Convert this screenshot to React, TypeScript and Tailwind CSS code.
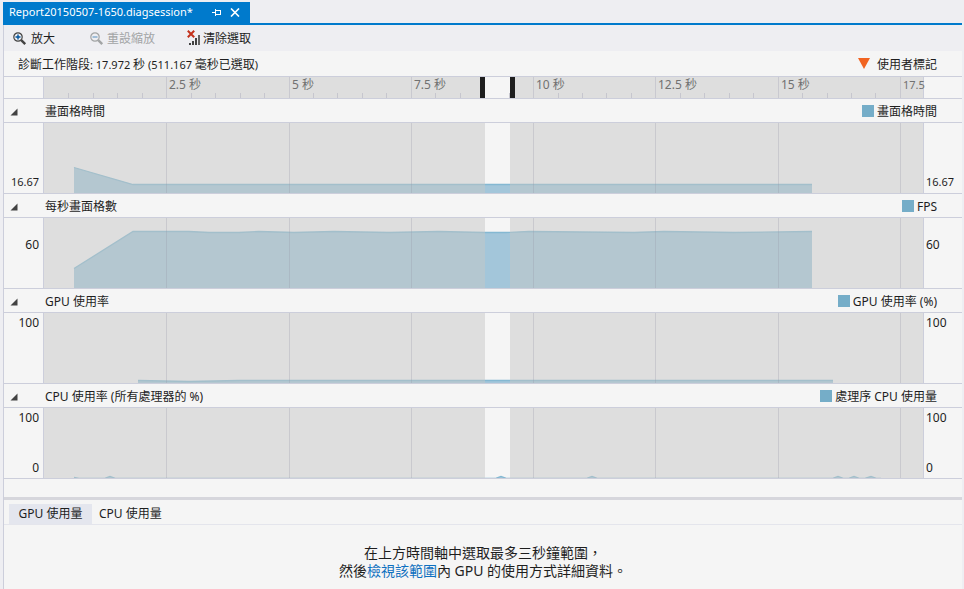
import React from "react";

const PX_PER_SECOND = 48.91;
const PLOT_W = 879;
const PLOT_H = 70;
const SELECTION = { start: 441, end: 466 };

const toX = (seconds: number) => Math.round(seconds * PX_PER_SECOND);
const percent = (x: number) => `${(x / PLOT_W) * 100}%`;

const MAJORS = [2.5, 5, 7.5, 10, 12.5, 15, 17.5];
const MINORS = Array.from({ length: 34 }, (_, i) => (i + 1) * 0.5).filter((s) => s % 2.5 !== 0);

type Point = [number, number];

type Lane = {
  id: string;
  title: string;
  legend: string;
  labels: { text: string; place: string }[];
  points: Point[];
};

const LANES: Lane[] = [
  {
    id: "frame-time",
    title: "畫面格時間",
    legend: "畫面格時間",
    labels: [{ text: "16.67", place: "mt-auto mb-[3px] text-[11px]" }],
    points: [[30, 44], [89, 61], [768, 61]],
  },
  {
    id: "fps",
    title: "每秒畫面格數",
    legend: "FPS",
    labels: [{ text: "60", place: "mt-[19px]" }],
    points: [
      [30, 50], [89, 13], [145, 13], [165, 14], [195, 14], [215, 13], [250, 14], [290, 13],
      [345, 14], [395, 13], [440, 14], [462, 14], [485, 13], [590, 14], [620, 13], [690, 14], [768, 13],
    ],
  },
  {
    id: "gpu",
    title: "GPU 使用率",
    legend: "GPU 使用率 (%)",
    labels: [{ text: "100", place: "mt-[2px]" }],
    points: [[94, 67], [145, 68], [195, 67], [789, 67]],
  },
  {
    id: "cpu",
    title: "CPU 使用率 (所有處理器的 %)",
    legend: "處理序 CPU 使用量",
    labels: [
      { text: "100", place: "mt-[2px]" },
      { text: "0", place: "mt-auto mb-[2px]" },
    ],
    points: [
      [30, 69], [35, 70], [60, 70], [66, 68], [72, 70], [451, 70], [457, 68], [463, 70], [542, 70], [548, 68], [554, 70],
      [788, 70], [794, 68], [800, 70], [804, 70], [810, 68], [816, 70], [820, 70], [827, 68], [833, 70], [837, 70],
    ],
  },
];

function Series({ points, fill, stroke, clip }: { points: Point[]; fill: string; stroke: string; clip: string }) {
  const line = points.map(([x, y]) => `${x},${y + 0.5}`).join(" ");
  const first = points[0][0];
  const last = points[points.length - 1][0];
  return (
    <g clipPath={`url(#${clip})`}>
      <polygon points={`${first},${PLOT_H} ${line} ${last},${PLOT_H}`} fill={fill} />
      <polyline points={line} fill="none" stroke={stroke} strokeWidth="1.3" vectorEffect="non-scaling-stroke" />
    </g>
  );
}

function Plot({ lane }: { lane: Lane }) {
  const { start, end } = SELECTION;
  return (
    <svg
      className="block h-[70px] min-w-0 flex-1 bg-[#dedede]"
      viewBox={`0 0 ${PLOT_W} ${PLOT_H}`}
      preserveAspectRatio="none"
      role="img"
      aria-label={lane.title}
    >
      <defs>
        <clipPath id={`${lane.id}-in`}>
          <rect x={start} width={end - start} height={PLOT_H} />
        </clipPath>
        <clipPath id={`${lane.id}-out`}>
          <rect width={start} height={PLOT_H} />
          <rect x={end} width={PLOT_W - end} height={PLOT_H} />
        </clipPath>
      </defs>
      <rect x={start} width={end - start} height={PLOT_H} fill="#f5f5f5" />
      <Series points={lane.points} fill="#b4c7d0" stroke="#a3bfcb" clip={`${lane.id}-out`} />
      <Series points={lane.points} fill="#a3c6da" stroke="#84b8d2" clip={`${lane.id}-in`} />
      {MAJORS.map((s) => (
        <rect key={s} x={toX(s)} width="1" height={PLOT_H} fill="#9898a8" fillOpacity="0.3" shapeRendering="crispEdges" />
      ))}
    </svg>
  );
}

function AxisLabels({ lane, side }: { lane: Lane; side: string }) {
  return (
    <div className={`flex h-[70px] shrink-0 flex-col leading-4 ${side}`}>
      {lane.labels.map((l) => (
        <span key={l.text} className={l.place}>
          {l.text}
        </span>
      ))}
    </div>
  );
}

function LaneView({ lane }: { lane: Lane }) {
  return (
    <section>
      <header className="flex h-6 items-center border-b border-[#cccedb] pt-[3px] pr-[25px]">
        <button type="button" aria-label={`摺疊 ${lane.title}`} className="flex w-[41px] shrink-0 pl-[6px]">
          <svg width="8" height="8" viewBox="0 0 8 8">
            <path d="M7.5 0.5V7.5H0.5Z" fill="#424242" />
          </svg>
        </button>
        <h2 className="flex-1">{lane.title}</h2>
        <span className="mr-[3px] mb-[2px] size-3 bg-[#75adc8]" />
        <span>{lane.legend}</span>
      </header>
      <div className="flex border-b border-[#cccedb]">
        <AxisLabels lane={lane} side="w-10 border-r border-[#cccedb] pr-1 text-right" />
        <Plot lane={lane} />
        <AxisLabels lane={lane} side="w-[39px] border-l border-[#cccedb] pl-[2px]" />
      </div>
    </section>
  );
}

function Ruler() {
  return (
    <div className="flex h-[23px] border-y border-[#cccedb] text-[#717171]">
      <div className="w-10 shrink-0 border-r border-[#cccedb]" />
      <div className="relative min-w-0 flex-1 bg-[#dedede]">
        <svg className="block h-full w-full" viewBox={`0 0 ${PLOT_W} 21`} preserveAspectRatio="none" shapeRendering="crispEdges">
          <rect x={SELECTION.start} width={SELECTION.end - SELECTION.start} height="21" fill="#f5f5f5" />
          {MINORS.map((s) => (
            <rect key={s} x={toX(s)} y="16" width="1" height="5" fill="#c6c6ce" />
          ))}
          {MAJORS.map((s) => (
            <rect key={s} x={toX(s)} width="1" height="21" fill="#c9c9d0" />
          ))}
          <rect x={SELECTION.start - 5} width="5" height="21" fill="#1e1e1e" />
          <rect x={SELECTION.end} width="5" height="21" fill="#1e1e1e" />
        </svg>
        {MAJORS.map((s) => (
          <span key={s} className="absolute top-0 pl-[3px] leading-4 whitespace-nowrap" style={{ left: percent(toX(s)) }}>
            {s < 17.5 ? (
              <>{s} 秒</>
            ) : (
              <span className="text-[11px]">{s}</span>
            )}
          </span>
        ))}
      </div>
      <div className="w-[39px] shrink-0 border-l border-[#cccedb]" />
    </div>
  );
}

function ZoomIcon({ sign, lens, mark }: { sign: string; lens: string; mark: string }) {
  return (
    <svg width="14" height="14" viewBox="0 0 14 14" fill="none">
      <circle cx="5" cy="5" r="4.2" stroke={lens} strokeWidth="1.2" />
      <path d="M8.2 8.2L12.2 12.2" stroke={lens} strokeWidth="2.4" />
      <path d={sign} stroke={mark} strokeWidth="1.4" />
    </svg>
  );
}

function ClearIcon() {
  return (
    <svg width="14" height="16" viewBox="0 0 14 16" fill="none">
      <path d="M3 13V15M6 11V15M9 8V15" stroke="#424242" strokeWidth="2" />
      <path d="M12 5V15" stroke="#424242" strokeWidth="1.6" />
      <path d="M0.8 0.8L7.2 7.2M7.2 0.8L0.8 7.2" stroke="#c3311c" strokeWidth="2" />
    </svg>
  );
}

function Figure({ children }: { children: React.ReactNode }) {
  return <span className="text-[11px]">{children}</span>;
}

export default function App() {
  return (
    <div className="flex min-h-screen flex-col bg-[#eeeef2] pr-[2px] pl-[3px] font-['Noto_Sans','Noto_Sans_CJK_TC',sans-serif] text-xs text-[#1e1e1e]">
      <div className="flex border-b-2 border-[#007acc] pt-[2px]">
        <div className="flex h-[21px] w-[247px] items-center bg-[#007acc] pl-[6px] text-white">
          <span className="flex-1 text-[11px] whitespace-nowrap">Report20150507-1650.diagsession*</span>
          <button type="button" aria-label="釘選" className="mr-[9px]">
            <svg width="9" height="7" viewBox="0 0 9 7" fill="none" stroke="white" shapeRendering="crispEdges">
              <path d="M0 3.5H3M3.5 0V7M3 1.5H8.5V5.5M3 5H8" />
            </svg>
          </button>
          <button type="button" aria-label="關閉" className="mr-[10px]">
            <svg width="10" height="9" viewBox="0 0 10 9" fill="none" stroke="white" strokeWidth="1.6">
              <path d="M1 0.5L9 8.5M9 0.5L1 8.5" />
            </svg>
          </button>
        </div>
      </div>
      <div className="flex flex-1 flex-col border-l border-[#cccedb]">
        <div role="toolbar" className="flex h-[26px] items-center pt-[2px]">
          <button type="button" className="flex w-[77px] items-center gap-1 pl-[9px]">
            <ZoomIcon lens="#424242" mark="#00539c" sign="M2.5 5H7.5M5 2.5V7.5" />
            放大
          </button>
          <button type="button" disabled className="flex w-[106px] items-center gap-[3px] pl-[9px] text-[#a2a4a5]">
            <ZoomIcon lens="#a2a4a5" mark="#7fa9cd" sign="M2.5 5H7.5" />
            重設縮放
          </button>
          <button type="button" className="flex items-center gap-[2px]">
            <span className="pb-[3px]">
              <ClearIcon />
            </span>
            清除選取
          </button>
        </div>
        <main className="flex flex-1 flex-col bg-[#f5f5f5]">
          <div className="flex h-[25px] items-center pt-[2px] pr-[25px] pl-[14px]">
            <p className="flex-1">
              診斷工作階段<Figure>: 17.972 </Figure>秒<Figure> (511.167 </Figure>毫秒已選取<Figure>)</Figure>
            </p>
            <svg width="12" height="11" viewBox="0 0 12 11" className="mr-[7px] mb-[2px]">
              <path d="M0 0H12L6 11Z" fill="#f16421" />
            </svg>
            <span>使用者標記</span>
          </div>
          <Ruler />
          {LANES.map((lane) => (
            <LaneView key={lane.id} lane={lane} />
          ))}
          <div className="h-[18px]" />
          <div role="tablist" className="flex h-7 items-end border-t-[3px] border-b border-t-[#d6d6dc] border-b-[#e4e5ec] pl-[5px]">
            <button type="button" role="tab" aria-selected="true" className="h-5 w-[83px] bg-[#e4e6ee] whitespace-nowrap">
              GPU 使用量
            </button>
            <button type="button" role="tab" aria-selected="false" className="h-5 px-[7px] whitespace-nowrap">
              CPU 使用量
            </button>
          </div>
          <div className="pt-[19px] text-center text-sm leading-[18px]">
            <p>在上方時間軸中選取最多三秒鐘範圍，</p>
            <p>
              然後
              <a href="#range" className="text-[#0e70c0]">
                檢視該範圍
              </a>
              內 GPU 的使用方式詳細資料。
            </p>
          </div>
        </main>
      </div>
    </div>
  );
}
